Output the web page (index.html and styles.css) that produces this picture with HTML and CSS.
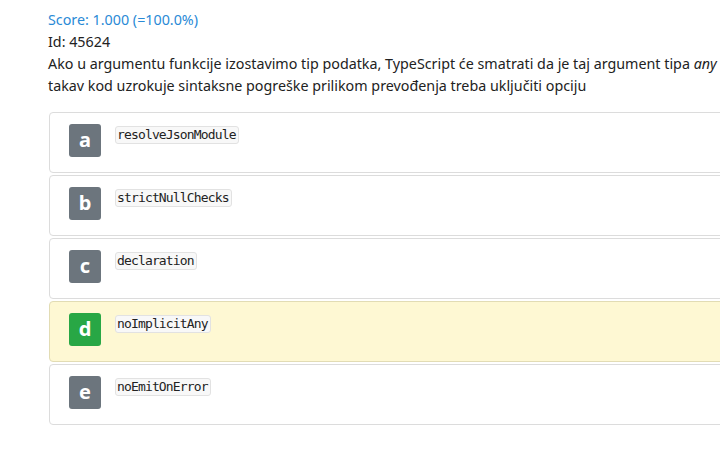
FILE: index.html
```html
<!DOCTYPE html>
<html lang="hr">
<head>
<meta charset="utf-8">
<link rel="stylesheet" href="styles.css">
</head>
<body>
<div class="page">
  <div class="score">Score: 1.000 (=100.0%)</div>
  <div class="line">Id: 45624</div>
  <div class="question">Ako u argumentu funkcije izostavimo tip podatka, TypeScript će smatrati da je taj argument tipa <em>any</em><br>takav kod uzrokuje sintaksne pogreške prilikom prevođenja treba uključiti opciju</div>
  <div class="answers">
    <div class="answer"><span class="badge">a</span><code>resolveJsonModule</code></div>
    <div class="answer"><span class="badge">b</span><code>strictNullChecks</code></div>
    <div class="answer"><span class="badge">c</span><code>declaration</code></div>
    <div class="answer correct"><span class="badge ok">d</span><code>noImplicitAny</code></div>
    <div class="answer"><span class="badge">e</span><code>noEmitOnError</code></div>
  </div>
</div>
</body>
</html>
```
FILE: styles.css
```css
html, body {
  margin: 0;
  padding: 0;
  background: #fff;
  overflow: hidden;
}
.page {
  width: 780px;
  padding: 9px 0 0 48px;
  font-family: "Noto Sans", "Open Sans", sans-serif;
  font-size: 14.3px;
  line-height: 22px;
  color: #222;
}
.score {
  color: #2a8ad6;
}
.question {
  white-space: nowrap;
}
.question em {
  font-style: italic;
}
.answers {
  margin: 15px 0 0 1px;
  display: flex;
  flex-direction: column;
  gap: 2px;
}
.answer {
  border: 1px solid #dcdcdc;
  border-radius: 4px;
  padding: 11px 19px 0;
  box-sizing: border-box;
  height: 61px;
  display: flex;
  align-items: flex-start;
  gap: 14px;
  background: #fff;
}
.answer.correct {
  background: #fef8d3;
  border-color: #e2dcb4;
}
.badge {
  width: 32px;
  height: 33px;
  border-radius: 3px;
  background: #6c757d;
  color: #fff;
  font-weight: bold;
  font-size: 20px;
  line-height: 32px;
  text-align: center;
  font-family: "Noto Sans", sans-serif;
}
.badge.ok {
  background: #28a745;
}
code {
  margin-top: 2px;
  font-family: "DejaVu Sans Mono", monospace;
  font-size: 13px;
  letter-spacing: -0.85px;
  line-height: 16px;
  color: #222;
  background: #f8f8f8;
  border: 1px solid #e2e2e2;
  border-radius: 3px;
  padding: 0 2px 0 1px;
}
```
